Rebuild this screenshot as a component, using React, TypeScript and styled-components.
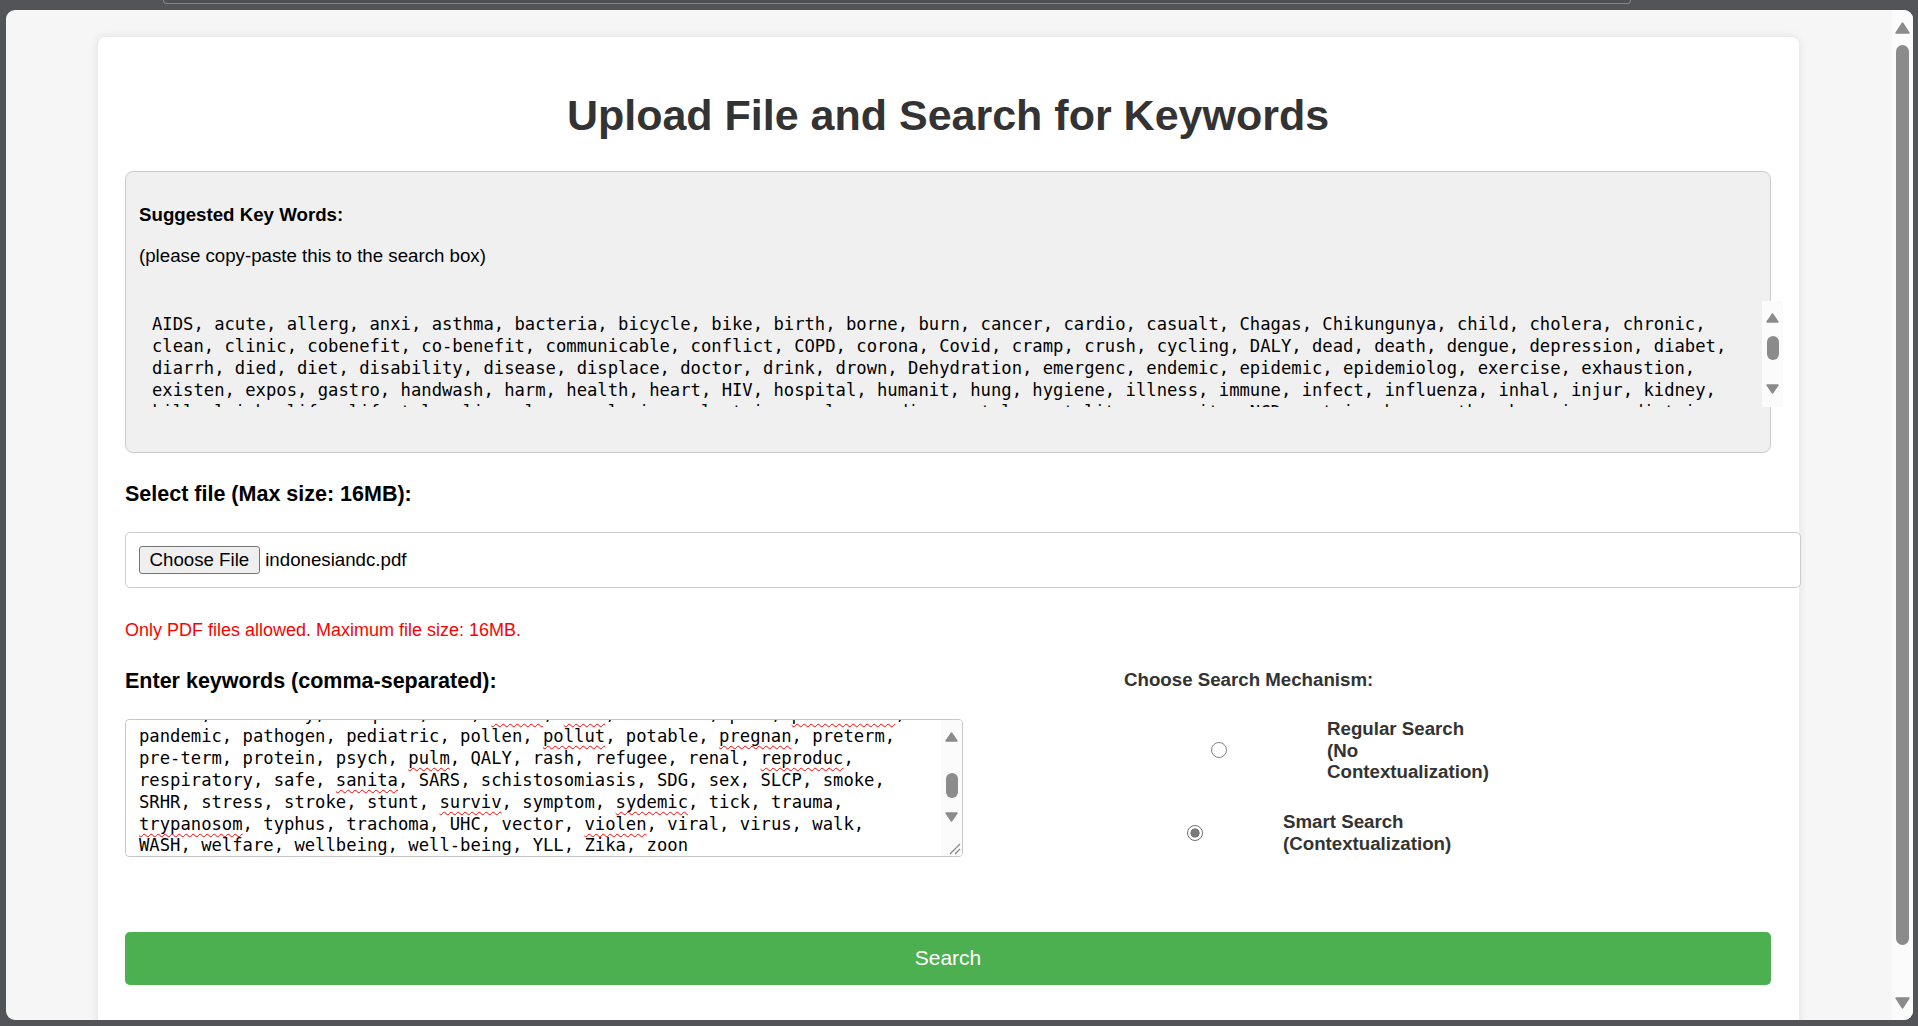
import React, { useLayoutEffect, useRef } from "react";
import styled, { createGlobalStyle } from "styled-components";

const SANS = `"Liberation Sans", Arial, sans-serif`;
const MONO = `"DejaVu Sans Mono", "Liberation Mono", monospace`;
const BAR_GREY = "#8b8b8b";
const TRACK = "#fbfbfb";

const GlobalStyle = createGlobalStyle`
  *, *::before, *::after { box-sizing: border-box; }
  html, body { margin: 0; padding: 0; overflow: hidden; background: #535458; }
  body { font-family: ${SANS}; }
  #root { width: 1918px; height: 1026px; }
`;

/* ---------- scroll rail (drawn scrollbar) ---------- */

const Rail = styled.div`
  flex: none;
  width: 21px;
  display: flex;
  flex-direction: column;
  background: ${TRACK};
`;

const RailButton = styled.div<{ $h: number }>`
  flex: none;
  height: ${(p) => p.$h}px;
  display: flex;
  align-items: center;
  justify-content: center;
`;

const RailTrack = styled.div`
  flex: 1;
  min-height: 0;
  display: flex;
  flex-direction: column;
  align-items: center;
`;

const RailThumb = styled.div<{ $w: number; $top: number; $size: number }>`
  flex: none;
  width: ${(p) => p.$w}px;
  height: ${(p) => p.$size}px;
  margin-top: ${(p) => p.$top}px;
  border-radius: ${(p) => p.$w}px;
  background: ${BAR_GREY};
`;

function Arrow({ dir, w, h }: { dir: "up" | "down"; w: number; h: number }) {
  const pts = dir === "up" ? `1,${h - 1} ${w / 2},1 ${w - 1},${h - 1}` : `1,1 ${w - 1},1 ${w / 2},${h - 1}`;
  return (
    <svg width={w} height={h} viewBox={`0 0 ${w} ${h}`}>
      <polygon points={pts} fill={BAR_GREY} stroke={BAR_GREY} strokeWidth={1.4} strokeLinejoin="round" />
    </svg>
  );
}

type RailProps = { button: number; thumbTop: number; thumbSize: number; thumbWidth: number; arrowW: number; arrowH: number };

function ScrollRail({ button, thumbTop, thumbSize, thumbWidth, arrowW, arrowH }: RailProps) {
  return (
    <Rail aria-hidden="true">
      <RailButton $h={button}>
        <Arrow dir="up" w={arrowW} h={arrowH} />
      </RailButton>
      <RailTrack>
        <RailThumb $w={thumbWidth} $top={thumbTop} $size={thumbSize} />
      </RailTrack>
      <RailButton $h={button}>
        <Arrow dir="down" w={arrowW} h={arrowH} />
      </RailButton>
    </Rail>
  );
}

/* ---------- desktop frame ---------- */

const Screen = styled.div`
  display: flex;
  flex-direction: column;
  width: 1918px;
  height: 1026px;
  background: #535458;
`;

const TopStrip = styled.div`
  height: 10px;
  padding-left: 163px;
`;

const TabEdge = styled.div`
  width: 1468px;
  height: 4px;
  border: 1px solid #85868b;
  border-top: 0;
  border-radius: 0 0 8px 8px;
  background: #4f5054;
`;

const Window = styled.div`
  display: flex;
  margin-left: 6px;
  width: 1907px;
  height: 1010px;
  border-radius: 9px;
  overflow: hidden;
  background: #f6f6f6;
`;

const Viewport = styled.div`
  flex: 1;
  min-width: 0;
  height: 100%;
  overflow-y: auto;
  scrollbar-width: none;
  padding: 27px 93px 36px 92px;
`;

/* ---------- card ---------- */

const Card = styled.main`
  display: flex;
  flex-direction: column;
  background: #fff;
  border-radius: 8px;
  box-shadow: 0 0 10px rgba(0, 0, 0, 0.1);
  padding: 27px 28px 45px 27px;
`;

const Title = styled.h1`
  margin: 27.4px 0 30.2px;
  text-align: center;
  font: bold 43px/49.4px ${SANS};
  color: #333;
`;

const SuggestBox = styled.section`
  background: #f0f0f0;
  border: 1px solid #ccc;
  border-radius: 8px;
  padding: 14px 13px;
`;

const SuggestHeading = styled.h3`
  margin: 18.5px 0 0;
  font: bold 18.7px/21.5px ${SANS};
  color: #000;
`;

const SuggestNote = styled.p`
  margin: 19.5px 0 0;
  font: 18.7px/21.5px ${SANS};
  color: #000;
`;

const ListFrame = styled.div`
  display: flex;
  width: calc(100% + 26px);
  height: 106px;
  margin: 34px 0 31px;
`;

const KeywordList = styled.pre`
  flex: 1;
  min-width: 0;
  margin: 0;
  padding: 13.2px 12px 12px 13px;
  overflow-y: auto;
  overflow-x: hidden;
  scrollbar-width: none;
  white-space: pre-wrap;
  font: 17.22px/21.9px ${MONO};
  color: #000;
`;

const FieldLabel = styled.label<{ $mt: number }>`
  display: block;
  margin-top: ${(p) => p.$mt}px;
  font: bold 21.5px/24.7px ${SANS};
  color: #000;
`;

const FileBox = styled.div`
  display: flex;
  align-items: center;
  width: calc(100% + 30px);
  height: 56.6px;
  margin-top: 25px;
  padding: 0 13px;
  border: 1px solid #ccc;
  border-radius: 5px;
  background: #fff;
`;

const ChooseButton = styled.button`
  height: 28.5px;
  padding: 0 9.5px;
  font: 18.7px/21.5px ${SANS};
  color: #000;
  background: #efefef;
  border: 1px solid #767676;
  border-radius: 3px;
`;

const FileName = styled.span`
  margin-left: 5.5px;
  font: 18.7px/21.5px ${SANS};
  color: #000;
`;

const Hint = styled.p`
  margin: 31.6px 0 0;
  font: 18px/20.7px ${SANS};
  color: #ff0000;
`;

const Columns = styled.div`
  display: flex;
  align-items: flex-start;
  margin-top: 28.4px;
`;

const KeywordColumn = styled.div`
  flex: none;
  width: 838px;
`;

const AreaFrame = styled.div`
  display: flex;
  height: 138px;
  margin-top: 25.3px;
  border: 1px solid #c6c6c6;
  border-radius: 4px;
  background: #fff;
  overflow: hidden;
`;

const KeywordArea = styled.div`
  flex: 1;
  min-width: 0;
  padding: 12px 12px 0 13px;
  overflow-y: auto;
  scrollbar-width: none;
  white-space: pre-wrap;
  font: 17.22px/21.9px ${MONO};
  color: #000;
  outline: none;
`;

const AreaSide = styled.div`
  flex: none;
  width: 21px;
  display: flex;
  flex-direction: column;
`;

const RailSlot = styled.div`
  flex: 1;
  min-height: 0;
  display: flex;
`;

const Resizer = styled.div`
  flex: none;
  height: 21px;
  display: flex;
  align-items: flex-end;
  justify-content: flex-end;
  background: ${TRACK};
`;

const AreaLine = styled.div``;

const Misspelt = styled.span`
  text-decoration-line: underline;
  text-decoration-style: wavy;
  text-decoration-color: #ff0000;
  text-decoration-thickness: 1px;
  text-underline-offset: 3px;
  text-decoration-skip-ink: none;
`;

const MechanismColumn = styled.div`
  margin-left: 161px;
`;

const MechanismTitle = styled.div`
  font: bold 18.7px/21.5px ${SANS};
  color: #333;
`;

const Options = styled.div`
  display: flex;
  flex-direction: column;
  gap: 28.5px;
  margin-top: 27.7px;
`;

const Option = styled.label`
  display: flex;
  align-items: center;
  cursor: pointer;
`;

const RadioSlot = styled.span<{ $w: number }>`
  flex: none;
  display: flex;
  justify-content: center;
  width: ${(p) => p.$w}px;
`;

const Radio = styled.input.attrs({ type: "radio" })`
  appearance: none;
  margin: 0;
  width: 16px;
  height: 16px;
  border-radius: 50%;
  border: 1px solid #858585;
  background: #fff;
  &:checked {
    border-color: #717171;
    background: radial-gradient(circle, #7a7a7a 0 4.3px, #fff 4.9px);
  }
`;

const OptionText = styled.span<{ $gap: number }>`
  width: 171px;
  margin-left: ${(p) => p.$gap}px;
  font: bold 18.7px/21.5px ${SANS};
  color: #333;
`;

const SearchButton = styled.button`
  width: 100%;
  height: 53px;
  margin-top: 75px;
  border: none;
  border-radius: 5px;
  background: #4caf50;
  color: #fff;
  font: 21px ${SANS};
  cursor: pointer;
`;

/* ---------- data ---------- */

const LIST_LINES = [
  "AIDS, acute, allerg, anxi, asthma, bacteria, bicycle, bike, birth, borne, burn, cancer, cardio, casualt, Chagas, Chikungunya, child, cholera, chronic,",
  "clean, clinic, cobenefit, co-benefit, communicable, conflict, COPD, corona, Covid, cramp, crush, cycling, DALY, dead, death, dengue, depression, diabet,",
  "diarrh, died, diet, disability, disease, displace, doctor, drink, drown, Dehydration, emergenc, endemic, epidemic, epidemiolog, exercise, exhaustion,",
  "existen, expos, gastro, handwash, harm, health, heart, HIV, hospital, humanit, hung, hygiene, illness, immune, infect, influenza, inhal, injur, kidney,",
  "kill, leish, life, lifestyle, live, lung, malaria, malnutri, measles, medic, mental, mortality, mosquito, NCD, nutri, obes, outbreak, pain, paediatric,",
  "pandemic, pathogen, pediatric, pollen, pollut, potable, pregnan, preterm, pre-term, protein, psych, pulm, QALY, rash, refugee, renal, reproduc,",
];
const LIST_TAIL =
  "respiratory, safe, sanita, SARS, schistosomiasis, SDG, sex, SLCP, smoke, SRHR, stress, stroke, stunt, surviv, symptom, sydemic, tick, trauma, trypanosom, typhus, trachoma, UHC, vector, violen, viral, virus, walk, WASH, welfare, wellbeing, well-being, YLL, Zika, zoon";

const SUGGESTED = LIST_LINES.join("\n") + "\n" + LIST_TAIL + "\n\n\n";

const AREA_PREFIX =
  LIST_LINES.slice(0, 4).join(" ") +
  " kill, leish, life, lifestyle, live, lung, malaria, malnutri, measles, medic,";

const AREA_LINES = [
  "mental, mortality, mosquito, NCD, nutri, obes, outbreak, pain, paediatric,",
  "pandemic, pathogen, pediatric, pollen, pollut, potable, pregnan, preterm,",
  "pre-term, protein, psych, pulm, QALY, rash, refugee, renal, reproduc,",
  "respiratory, safe, sanita, SARS, schistosomiasis, SDG, sex, SLCP, smoke,",
  "SRHR, stress, stroke, stunt, surviv, symptom, sydemic, tick, trauma,",
  "trypanosom, typhus, trachoma, UHC, vector, violen, viral, virus, walk,",
  "WASH, welfare, wellbeing, well-being, YLL, Zika, zoon",
];

const MISSPELT = new Set([
  "allerg", "anxi", "casualt", "cobenefit", "diabet", "diarrh", "emergenc", "epidemiolog",
  "existen", "expos", "humanit", "inhal", "injur", "leish", "malnutri",
  "nutri", "obes", "paediatric", "pollut", "pregnan", "pulm", "reproduc", "sanita",
  "surviv", "sydemic", "trypanosom", "violen",
]);

const marked = (text: string) =>
  text.split(/([A-Za-z-]+)/).map((part, i) =>
    MISSPELT.has(part) ? <Misspelt key={i}>{part}</Misspelt> : <React.Fragment key={i}>{part}</React.Fragment>
  );

export default function App() {
  const areaRef = useRef<HTMLDivElement>(null);

  useLayoutEffect(() => {
    const el = areaRef.current;
    if (el) el.scrollTop = el.scrollHeight - el.clientHeight - 1;
  }, []);

  return (
    <>
      <GlobalStyle />
      <Screen>
        <TopStrip>
          <TabEdge />
        </TopStrip>
        <Window>
          <Viewport>
            <Card>
              <Title>Upload File and Search for Keywords</Title>

              <SuggestBox>
                <SuggestHeading>Suggested Key Words:</SuggestHeading>
                <SuggestNote>(please copy-paste this to the search box)</SuggestNote>
                <ListFrame>
                  <KeywordList>{SUGGESTED}</KeywordList>
                  <ScrollRail button={35} thumbTop={0} thumbSize={24} thumbWidth={12} arrowW={13} arrowH={10} />
                </ListFrame>
              </SuggestBox>

              <FieldLabel $mt={29}>Select file (Max size: 16MB):</FieldLabel>
              <FileBox>
                <ChooseButton type="button">Choose File</ChooseButton>
                <FileName>indonesiandc.pdf</FileName>
              </FileBox>
              <Hint>Only PDF files allowed. Maximum file size: 16MB.</Hint>

              <Columns>
                <KeywordColumn>
                  <FieldLabel $mt={0}>Enter keywords (comma-separated):</FieldLabel>
                  <AreaFrame>
                    <KeywordArea ref={areaRef} role="textbox" aria-multiline="true">
                      <AreaLine>{marked(AREA_PREFIX)}</AreaLine>
                      {AREA_LINES.map((line, i) => (
                        <AreaLine key={i}>{marked(line)}</AreaLine>
                      ))}
                    </KeywordArea>
                    <AreaSide>
                      <RailSlot>
                        <ScrollRail button={35} thumbTop={18} thumbSize={25} thumbWidth={12} arrowW={13} arrowH={10} />
                      </RailSlot>
                      <Resizer aria-hidden="true">
                        <svg width="21" height="21" viewBox="0 0 21 21">
                          <line x1="9" y1="19" x2="19" y2="9" stroke="#8a8a8a" strokeWidth="1.2" />
                          <line x1="14" y1="19" x2="19" y2="14" stroke="#8a8a8a" strokeWidth="1.2" />
                        </svg>
                      </Resizer>
                    </AreaSide>
                  </AreaFrame>
                </KeywordColumn>

                <MechanismColumn>
                  <MechanismTitle>Choose Search Mechanism:</MechanismTitle>
                  <Options>
                    <Option>
                      <RadioSlot $w={190}>
                        <Radio name="mechanism" value="regular" />
                      </RadioSlot>
                      <OptionText $gap={13}>Regular Search (No Contextualization)</OptionText>
                    </Option>
                    <Option>
                      <RadioSlot $w={142}>
                        <Radio name="mechanism" value="smart" defaultChecked />
                      </RadioSlot>
                      <OptionText $gap={17}>Smart Search (Contextualization)</OptionText>
                    </Option>
                  </Options>
                </MechanismColumn>
              </Columns>

              <SearchButton type="button">Search</SearchButton>
            </Card>
          </Viewport>
          <ScrollRail button={35} thumbTop={0} thumbSize={900} thumbWidth={13} arrowW={15} arrowH={12} />
        </Window>
      </Screen>
    </>
  );
}
